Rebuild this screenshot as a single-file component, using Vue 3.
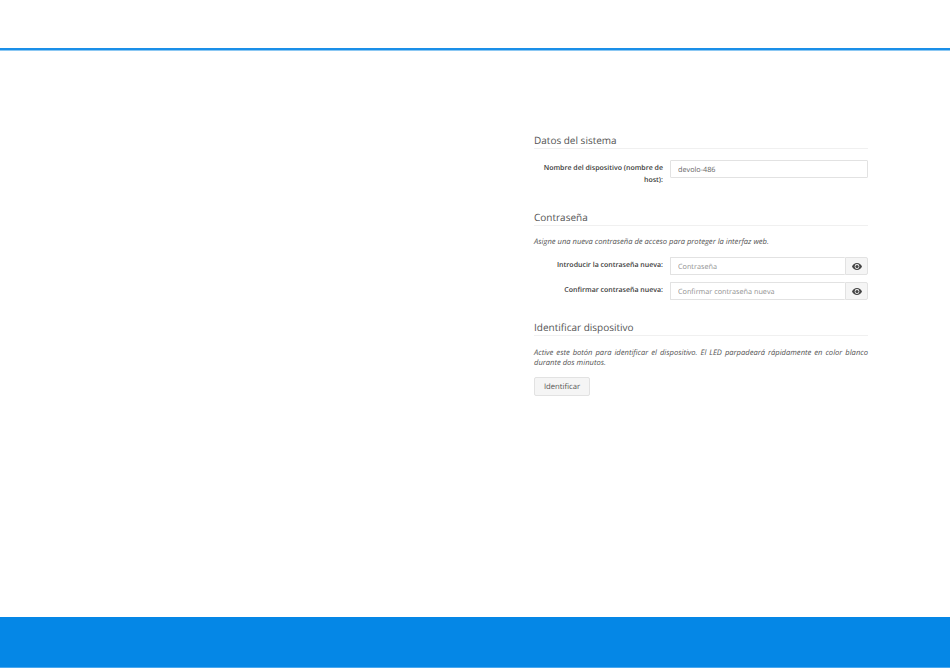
<script setup>
const passwords = [
  { label: 'Introducir la contraseña nueva:', placeholder: 'Contraseña' },
  { label: 'Confirmar contraseña nueva:', placeholder: 'Confirmar contraseña nueva' },
]
</script>

<template>
  <div class="page">
    <header class="top"></header>
    <main class="main">
      <section class="panel">
        <h2 class="title first">Datos del sistema</h2>
        <div class="row host">
          <label class="label">Nombre del dispositivo (nombre de host):</label>
          <div class="control"><input class="input" value="devolo-486" /></div>
        </div>

        <h2 class="title second">Contraseña</h2>
        <p class="hint">Asigne una nueva contraseña de acceso para proteger la interfaz web.</p>
        <div v-for="p in passwords" :key="p.label" class="row pw">
          <label class="label">{{ p.label }}</label>
          <div class="control group">
            <input class="input joined" :placeholder="p.placeholder" />
            <button class="eye" type="button" aria-label="Mostrar">
              <svg width="10" height="7" viewBox="0 0 20 14">
                <path fill="#444" fill-rule="evenodd" d="M10 0C5.500 0 2 3 0 7c2 4 5.500 7 10 7s8-3 10-7c-2-4-5.500-7-10-7zm0 2.200a4.800 4.800 0 1 1 0 9.600 4.800 4.800 0 0 1 0-9.600z"/>
                <circle cx="10" cy="7" r="3.200" fill="#444"/>
              </svg>
            </button>
          </div>
        </div>

        <h2 class="title third">Identificar dispositivo</h2>
        <p class="hint justify">Active este botón para identificar el dispositivo. El LED parpadeará rápidamente en color blanco durante dos minutos.</p>
        <button class="btn" type="button">Identificar</button>
      </section>
    </main>
    <footer class="bottom"></footer>
  </div>
</template>

<style>
html, body { margin: 0; background: #fff; }
</style>

<style scoped>
.page {
  height: 668px;
  display: flex;
  flex-direction: column;
  font-family: "Open Sans", "Liberation Sans", sans-serif;
  text-rendering: geometricPrecision;
  color: #333;
  overflow: hidden;
}
.top {
  height: 48px;
  flex: none;
  border-bottom: 2px solid #1a8fe8;
  box-shadow: 0 1px 0 #8cc8f3;
}
.main {
  flex: 1;
  display: flex;
  justify-content: flex-end;
  padding-right: 82px;
  min-height: 0;
}
.panel { width: 334px; }
.title {
  margin: 0;
  font-size: 10px;
  line-height: 14px;
  font-weight: 400;
  color: #555;
  padding-bottom: 1px;
  border-bottom: 1px solid #f0f0f0;
}
.first { margin-top: 83px; }
.second { margin-top: 16px; }
.third { margin-top: 20px; }
.row {
  display: flex;
  gap: 7px;
}
.host { margin-top: 11px; height: 34px; }
.pw { margin-bottom: 7px; height: 18px; }
.label {
  width: 129px;
  flex: none;
  text-align: right;
  font-size: 7px;
  font-weight: 600;
  line-height: 12px;
  padding-top: 3px;
  color: #3a3a3a;
}
.control { flex: 1; min-width: 0; }
.group { display: flex; }
.input {
  display: block;
  box-sizing: border-box;
  width: 100%;
  height: 18px;
  padding: 1px 7px 0;
  border: 1px solid #e2e2e2;
  border-radius: 1px;
  font: 7.250px "Open Sans", sans-serif;
  text-rendering: geometricPrecision;
  color: #666;
  outline: none;
  background: #fff;
}
.input::placeholder { color: #909090; opacity: 1; }
.joined { flex: 1; min-width: 0; border-right: 0; }
.eye {
  width: 23px;
  height: 18px;
  flex: none;
  padding: 0;
  display: flex;
  align-items: center;
  justify-content: center;
  background: #f5f5f5;
  border: 1px solid #e2e2e2;
  border-radius: 0 2px 2px 0;
}
.hint {
  margin: 11px 0 9px;
  font-size: 7.600px;
  line-height: 11px;
  font-style: italic;
  color: #555;
}
.justify { text-align: justify; margin: 12px 0 9px; line-height: 10px; }
.btn {
  display: block;
  width: 56px;
  height: 19px;
  padding: 1px 0 0;
  background: #f5f5f5;
  border: 1px solid #e2e2e2;
  border-radius: 2px;
  font: 7.700px "Open Sans", sans-serif;
  text-rendering: geometricPrecision;
  color: #555;
}
.bottom {
  height: 50px;
  flex: none;
  margin-bottom: 1px;
  background: #0587e6;
  box-shadow: 0 1px 0 #4aa8ef;
}
</style>
